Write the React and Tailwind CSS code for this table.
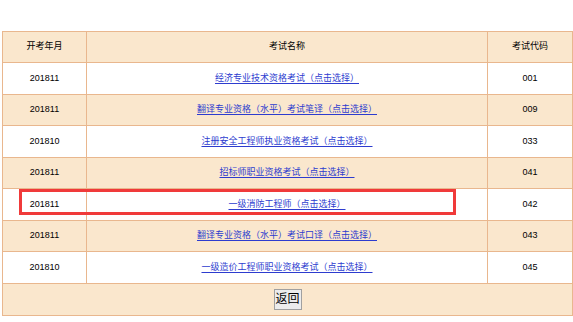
const rows = [
  ["201811", "经济专业技术资格考试（点击选择）", "001"],
  ["201811", "翻译专业资格（水平）考试笔译（点击选择）", "009"],
  ["201810", "注册安全工程师执业资格考试（点击选择）", "033"],
  ["201811", "招标师职业资格考试（点击选择）", "041"],
  ["201811", "一级消防工程师（点击选择）", "042"],
  ["201811", "翻译专业资格（水平）考试口译（点击选择）", "043"],
  ["201810", "一级造价工程师职业资格考试（点击选择）", "045"],
];

export default function App() {
  return (
    <div className="w-[573px] h-[322px] bg-white pt-[31px] px-[2px] font-['Liberation_Sans','Noto_Sans_CJK_SC',sans-serif] text-[9px] text-black">
      <div className="relative">
        <table className="w-[570px] border-collapse table-fixed">
          <colgroup>
            <col className="w-[84px]" />
            <col className="w-[401px]" />
            <col className="w-[85px]" />
          </colgroup>
          <thead>
            <tr className="bg-[#fae7cd] h-[31px]">
              <th className="border border-[#e9b78e] font-normal">开考年月</th>
              <th className="border border-[#e9b78e] font-normal">考试名称</th>
              <th className="border border-[#e9b78e] font-normal">考试代码</th>
            </tr>
          </thead>
          <tbody>
            {rows.map((r, i) => (
              <tr key={r[2]} className={`h-[31.5px] ${i % 2 ? "bg-[#fae7cd]" : "bg-white"}`}>
                <td className="border border-[#e9b78e] text-center">{r[0]}</td>
                <td className="border border-[#e9b78e] text-center">
                  <a href="#" className="text-[#2d3ccf] underline underline-offset-2">{r[1]}</a>
                </td>
                <td className="border border-[#e9b78e] text-center">{r[2]}</td>
              </tr>
            ))}
            <tr className="bg-[#fae7cd] h-[32px]">
              <td colSpan={3} className="border border-[#e9b78e] text-center">
                <button className="w-[28px] h-[21px] bg-[#ececec] border border-[#a0a0a0] text-[12px] leading-none align-middle">返回</button>
              </td>
            </tr>
          </tbody>
        </table>
        <div className="absolute left-[17px] top-[158px] w-[437px] h-[26px] border-[3px] border-[#f03a3a] pointer-events-none" />
      </div>
    </div>
  );
}
